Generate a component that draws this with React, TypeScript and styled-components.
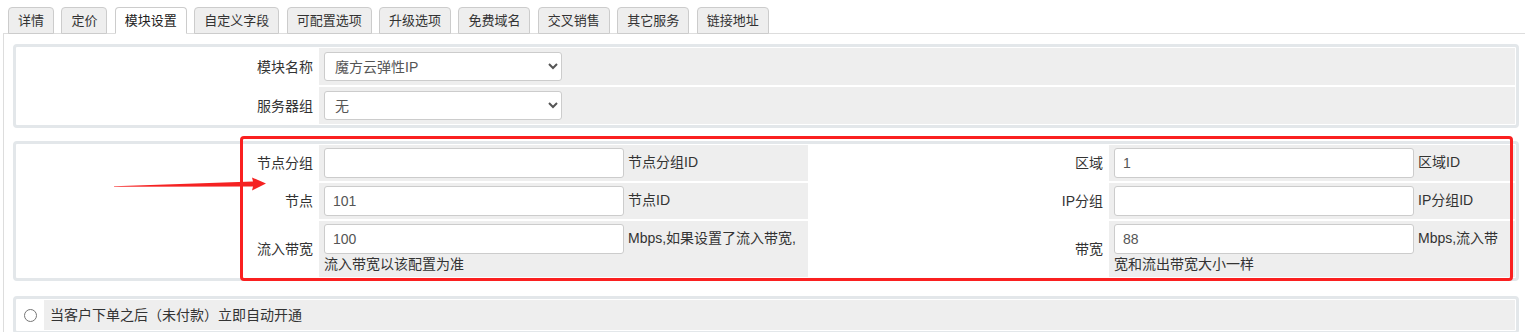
import styled, { createGlobalStyle } from 'styled-components';

const GlobalStyle = createGlobalStyle`
  html, body {
    margin: 0;
    padding: 0;
    background: #fff;
    overflow: hidden;
  }
  body {
    font-family: "Liberation Sans", "Noto Sans CJK SC", sans-serif;
    color: #333;
  }
`;

const tabs = ['详情', '定价', '模块设置', '自定义字段', '可配置选项', '升级选项', '免费域名', '交叉销售', '其它服务', '链接地址'];

const Page = styled.div`
  position: relative;
  width: 1525px;
  height: 332px;
  box-sizing: border-box;
  padding-top: 7px;
  overflow: hidden;
`;

const TabBar = styled.ul`
  display: flex;
  gap: 7.4px;
  margin: 0 0 -1px;
  padding: 0 0 0 8px;
  list-style: none;
  position: relative;
  z-index: 1;
`;

const Tab = styled.li<{ $active?: boolean }>`
  height: 27px;
  box-sizing: border-box;
  padding: 0 9px;
  border: 1px solid #ccc;
  border-bottom-color: ${(p) => (p.$active ? '#fff' : '#ccc')};
  border-radius: 4px 4px 0 0;
  background: ${(p) => (p.$active ? '#fff' : '#eee')};
  font-size: 13px;
  line-height: 25px;
  color: ${(p) => (p.$active ? '#222' : '#333')};
  white-space: nowrap;
`;

const Panel = styled.div`
  margin-left: 3px;
  border-top: 1px solid #ddd;
  border-left: 1px solid #ddd;
  padding: 10px 6px 0 9px;
`;

const Box = styled.div<{ $gap?: number }>`
  border: 3px solid #e3e7ea;
  border-radius: 4px;
  padding: 1px;
  margin-bottom: ${(p) => p.$gap ?? 13}px;
`;

const FormGrid = styled.div<{ $cols: string }>`
  display: grid;
  grid-template-columns: ${(p) => p.$cols};
  row-gap: 2px;
  font-size: 14px;
  line-height: 20px;
`;

const Label = styled.div`
  display: flex;
  align-items: center;
  justify-content: flex-end;
  padding-right: 6px;
  white-space: nowrap;
`;

const Field = styled.div<{ $pad?: string }>`
  background: #eee;
  padding: ${(p) => p.$pad ?? '3px 5px'};
  min-width: 0;
`;

const TextInput = styled.input`
  width: 300px;
  height: 30px;
  box-sizing: border-box;
  margin: 0 4px 0 0;
  padding: 0 8px;
  border: 1px solid #ccc;
  border-radius: 3px;
  background: #fff;
  font: inherit;
  font-size: 14px;
  color: #555;
  vertical-align: middle;
  outline: none;
`;

const Select = styled.select`
  display: block;
  width: 238px;
  height: 29px;
  box-sizing: border-box;
  padding: 0 6px;
  border: 1px solid #ccc;
  border-radius: 3px;
  background: #fff;
  font: inherit;
  font-size: 14px;
  color: #555;
`;

const RadioCell = styled.div`
  display: flex;
  align-items: center;
  justify-content: center;
`;

const Radio = styled.input`
  margin: 0;
  width: 13px;
  height: 13px;
`;

const Highlight = styled.div`
  position: absolute;
  left: 240px;
  top: 136px;
  width: 1273px;
  height: 145px;
  box-sizing: border-box;
  border: 3px solid #fa2020;
  border-radius: 4px;
  pointer-events: none;
`;

const Overlay = styled.svg`
  position: absolute;
  left: 0;
  top: 0;
  pointer-events: none;
`;

type Pair = { label: string; value: string; help: string };

const rows: [Pair, Pair][] = [
  [
    { label: '节点分组', value: '', help: '节点分组ID' },
    { label: '区域', value: '1', help: '区域ID' },
  ],
  [
    { label: '节点', value: '101', help: '节点ID' },
    { label: 'IP分组', value: '', help: 'IP分组ID' },
  ],
  [
    { label: '流入带宽', value: '100', help: 'Mbps,如果设置了流入带宽,流入带宽以该配置为准' },
    { label: '带宽', value: '88', help: 'Mbps,流入带宽和流出带宽大小一样' },
  ],
];

const App = () => {
  return (
    <Page>
      <GlobalStyle />
      <TabBar>
        {tabs.map((t) => (
          <Tab key={t} $active={t === '模块设置'}>
            {t}
          </Tab>
        ))}
      </TabBar>
      <Panel>
        <Box>
          <FormGrid $cols="302px 1fr">
            <Label>模块名称</Label>
            <Field $pad="4px 5px">
              <Select defaultValue="mf">
                <option value="mf">魔方云弹性IP</option>
              </Select>
            </Field>
            <Label>服务器组</Label>
            <Field $pad="4px 5px">
              <Select defaultValue="none">
                <option value="none">无</option>
              </Select>
            </Field>
          </FormGrid>
        </Box>
        <Box $gap={15}>
          <FormGrid $cols="302px 489px 301px 1fr">
            {rows.map((pair) =>
              pair.map((f) => [
                <Label key={f.label + 'l'}>{f.label}</Label>,
                <Field key={f.label + 'f'}>
                  <TextInput defaultValue={f.value} />
                  {f.help}
                </Field>,
              ])
            )}
          </FormGrid>
        </Box>
        <Box>
          <FormGrid $cols="27px 1fr">
            <RadioCell>
              <Radio type="radio" name="auto" />
            </RadioCell>
            <Field $pad="5px 6px">当客户下单之后（未付款）立即自动开通</Field>
          </FormGrid>
        </Box>
      </Panel>
      <Highlight />
      <Overlay width="1525" height="332" viewBox="0 0 1525 332">
        <polygon
          points="114,186.2 253,181.6 252,177.5 266,183.4 252,190.5 253,186.4 114,186.8"
          fill="#f52222"
        />
      </Overlay>
    </Page>
  );
};

export default App;
